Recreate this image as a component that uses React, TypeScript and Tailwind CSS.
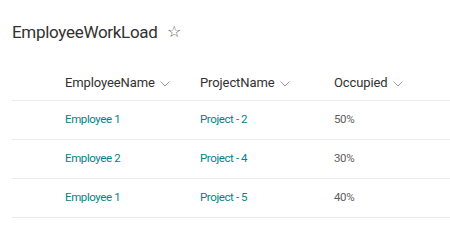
import React from 'react';

interface Row {
  employee: string;
  project: string;
  occupied: string;
}

const rows: Row[] = [
  { employee: 'Employee 1', project: 'Project - 2', occupied: '50%' },
  { employee: 'Employee 2', project: 'Project - 4', occupied: '30%' },
  { employee: 'Employee 1', project: 'Project - 5', occupied: '40%' },
];

const Chevron: React.FC = () => (
  <svg width="10" height="10" viewBox="0 0 10 10" className="ml-[5px] mt-[1px]">
    <path d="M0.5 2.5 L5 7 L9.5 2.5" fill="none" stroke="#a19f9d" strokeWidth="1" />
  </svg>
);

const HeaderCell: React.FC<{ label: string; width: string }> = ({ label, width }) => (
  <div className={`flex items-center ${width}`}>
    <span>{label}</span>
    <Chevron />
  </div>
);

const App: React.FC = () => {
  return (
    <div
      className="w-[450px] h-[248px] bg-white text-[#323130] overflow-hidden"
      style={{ fontFamily: 'Roboto, "Open Sans", sans-serif' }}
    >
      <div className="flex items-center pl-[12px] pt-[18px] h-[46px]">
        <h1 className="text-[17px] leading-[26px] tracking-[-0.3px]">EmployeeWorkLoad</h1>
        <span className="ml-[9px] text-[16px] text-[#605e5c] leading-none">☆</span>
      </div>

      <div className="ml-[12px] mt-[16px]">
        <div className="flex items-center h-[39px] pt-[4px] border-b border-[#edebe9] pl-[53px] text-[13px] tracking-[-0.1px]">
          <HeaderCell label="EmployeeName" width="w-[135px]" />
          <HeaderCell label="ProjectName" width="w-[134px]" />
          <HeaderCell label="Occupied" width="w-[100px]" />
        </div>
        {rows.map((r, i) => (
          <div
            key={i}
            className="flex items-center h-[39px] border-b border-[#edebe9] pl-[53px] text-[11.5px] tracking-[-0.4px]"
          >
            <div className="w-[135px] text-[#038387]">{r.employee}</div>
            <div className="w-[134px] text-[#038387]">{r.project}</div>
            <div className="text-[#605e5c]">{r.occupied}</div>
          </div>
        ))}
      </div>
    </div>
  );
};

export default App;
